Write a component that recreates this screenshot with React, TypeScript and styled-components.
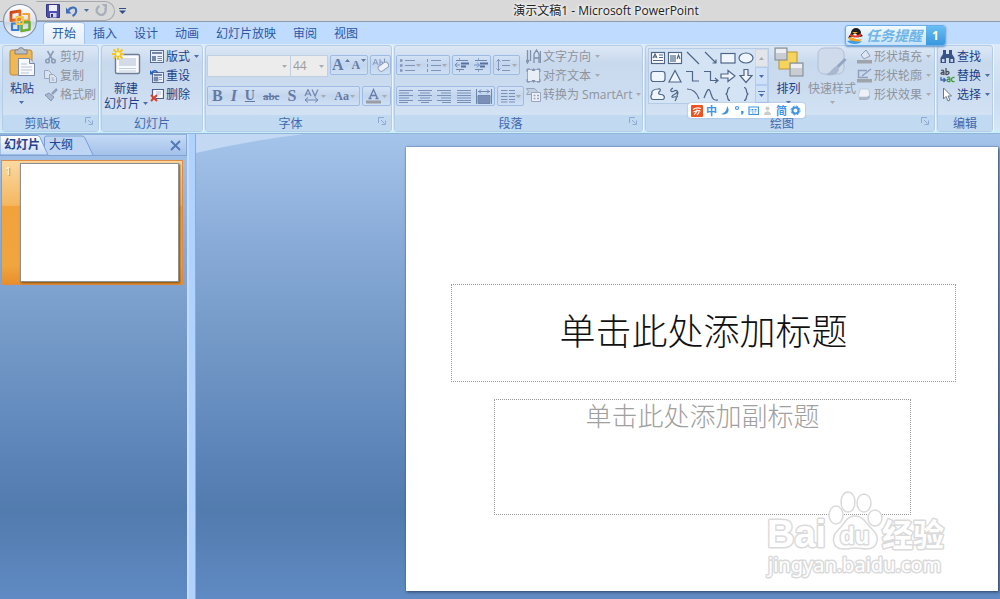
import React from "react";
import styled, { createGlobalStyle, css } from "styled-components";

const GlobalStyle = createGlobalStyle`
  * { box-sizing: border-box; }
  html, body { margin: 0; padding: 0; }
  body {
    background: #608ac3;
    font-family: "Open Sans", "Noto Sans CJK SC", sans-serif;
    font-size: 12px;
    line-height: 16px;
    color: #1e3f86;
  }
  button, select { font: inherit; color: inherit; }
  button { border: 0; padding: 0; margin: 0; background: none; cursor: default; }
  svg { display: block; flex: none; }
`;

/* ---------- window frame ---------- */

const Window = styled.div`
  display: flex;
  flex-direction: column;
  min-height: 100vh;
  position: relative;
`;

const TitleBar = styled.header`
  display: flex;
  align-items: center;
  height: 22px;
  background: #d9d9d9;
  border-bottom: 1px solid #8f9baa;
  position: relative;
`;

const QuickAccess = styled.div`
  display: flex;
  align-items: center;
  gap: 6px;
  height: 20px;
  margin-left: 36px;
  padding: 0 6px 0 9px;
  border: 1px solid #a5a8ad;
  border-left-color: transparent;
  border-radius: 0 10px 10px 0;
`;

const MoreCommands = styled.button`
  margin-left: 4px;
`;

const WindowTitle = styled.h1`
  flex: 1;
  margin: 0;
  padding-left: 86px;
  text-align: center;
  font-size: 12px;
  line-height: 20px;
  font-weight: 400;
  color: #222;
  text-shadow: 0 0 4px #fff, 0 0 4px #fff;
`;

const OfficeButton = styled.button`
  position: absolute;
  left: 2px;
  top: 3px;
  z-index: 3;
`;

const TabStrip = styled.nav`
  display: flex;
  gap: 1px;
  padding: 1px 0 0 44px;
  height: 22px;
  background: #bfdbff;
`;

const Tab = styled.button<{ $active?: boolean }>`
  padding: 0 8px;
  line-height: 20px;
  color: #2c57a3;
  ${(p) =>
    p.$active &&
    css`
      background: linear-gradient(#f4f9ff, #e2edfa);
      box-shadow: 0 0 0 1px #a3c3ee;
      border-radius: 3px 3px 0 0;
    `}
`;

const Reminder = styled.button`
  position: absolute;
  right: 54px;
  top: 25px;
  z-index: 3;
  display: flex;
  align-items: stretch;
  height: 21px;
  border: 1px solid #69aee6;
  border-radius: 3px;
  background: linear-gradient(#f2faff, #c5e3fb);
  box-shadow: 0 1px 2px #6b94c4;
  overflow: hidden;
`;

const ReminderText = styled.span`
  padding: 0 4px 0 2px;
  font-size: 14px;
  line-height: 19px;
  font-weight: 700;
  font-style: italic;
  color: #6fb4e8;
`;

const ReminderCount = styled.span`
  width: 19px;
  line-height: 19px;
  font-weight: 700;
  text-align: center;
  color: #fffbd0;
  background: linear-gradient(#69bdf3, #3a97dd);
`;

/* ---------- ribbon ---------- */

const RibbonBar = styled.div`
  position: relative;
  display: flex;
  gap: 2px;
  padding: 1px 2px;
  background: linear-gradient(#dde9f7, #c9dcf1 60%, #d5e8f8);
  border-bottom: 1px solid #93b4da;
  box-shadow: inset 0 -2px 0 #c8eef8;
`;

const GroupBox = styled.section<{ $width: number }>`
  display: flex;
  flex-direction: column;
  flex: none;
  width: ${(p) => p.$width}px;
  border: 1px solid #b3cde9;
  border-radius: 3px;
  background: linear-gradient(#dce7f5, #c8d9ed 20%, #cbdcf0 50%, #d8e7f6);
  box-shadow: 1px 0 0 #eef6fd;
`;

const GroupBody = styled.div`
  display: flex;
  align-items: flex-start;
  height: 69px;
`;

const GroupLabel = styled.h2<{ $launcher?: boolean }>`
  display: flex;
  align-items: flex-end;
  justify-content: center;
  position: relative;
  margin: 0;
  height: 16px;
  padding-right: ${(p) => (p.$launcher ? 16 : 0)}px;
  font-size: 12px;
  line-height: 14px;
  font-weight: 400;
  color: #3f68ae;
  background: #c1d9f1;
`;

const Launcher = styled.button`
  position: absolute;
  right: 4px;
  top: 2px;
`;

const BigButton = styled.button<{ $width: number; $off?: boolean }>`
  display: flex;
  flex-direction: column;
  align-items: center;
  flex: none;
  width: ${(p) => p.$width}px;
  padding-top: 1px;
  color: ${(p) => (p.$off ? "#8e939c" : "#1e3f86")};
  line-height: 15px;
  gap: 4px;
`;

const BigLine = styled.span`
  display: flex;
  align-items: center;
  gap: 3px;
  white-space: nowrap;
`;

const BigText = styled.span`
  display: flex;
  flex-direction: column;
  align-items: center;
`;

const ArrowSlot = styled.span`
  display: flex;
  align-items: center;
  height: 12px;
`;

const SmallColumn = styled.div`
  display: flex;
  flex-direction: column;
  flex: none;
  padding-top: 1px;
`;

const SmallButton = styled.button<{ $off?: boolean }>`
  display: flex;
  align-items: center;
  gap: 2px;
  height: 19px;
  white-space: nowrap;
  color: ${(p) => (p.$off ? "#8e939c" : "#1e3f86")};
`;

const SmallText = styled.span`
  margin-right: 2px;
`;

const ControlRows = styled.div`
  display: flex;
  flex-direction: column;
  gap: 11px;
  padding: 9px 2px 0 1px;
`;

const ControlRow = styled.div`
  display: flex;
  gap: 2px;
  height: 20px;
`;

const Segment = styled.div<{ $width: number }>`
  display: flex;
  align-items: center;
  justify-content: space-around;
  flex: none;
  width: ${(p) => p.$width}px;
  height: 20px;
  border: 1px solid #9dbbe3;
  border-radius: 2px;
  background: linear-gradient(#d3e2f5, #c2d5ee 50%, #cfe0f4);
`;

const GlyphButton = styled.button<{ $size?: number }>`
  display: flex;
  align-items: center;
  gap: 1px;
  line-height: 18px;
  font-family: "Liberation Serif", serif;
  font-weight: 700;
  font-size: ${(p) => p.$size ?? 14}px;
  color: #647aa3;
`;

const RaisedMark = styled.span`
  align-self: flex-start;
  padding-top: 3px;
`;

const Italic = styled.i`
  font-weight: 700;
`;

const Combo = styled.label<{ $width: number }>`
  position: relative;
  display: flex;
  flex: none;
  width: ${(p) => p.$width}px;
  height: 22px;
  border: 1px solid #c0cfe2;
  background: #ececec;

  & + & {
    margin-left: -3px;
  }

  svg {
    position: absolute;
    right: 3px;
    top: 9px;
  }
`;

const ComboSelect = styled.select`
  flex: 1;
  min-width: 0;
  appearance: none;
  border: 0;
  padding: 0 2px;
  background: transparent;
  color: #9b9b9b;
`;

const GalleryBox = styled.div`
  display: flex;
  flex: none;
  width: 121px;
  height: 56px;
  margin: 2px 0 0 2px;
  border: 1px solid #b5cce8;
  background: #d5e4f5;
`;

const ShapeGrid = styled.div`
  flex: 1;
  display: grid;
  grid-template-columns: repeat(6, 1fr);
  grid-template-rows: repeat(3, 18px);
  place-items: center;
`;

const GalleryScroll = styled.div`
  display: flex;
  flex-direction: column;
  width: 13px;
`;

const ScrollButton = styled.button<{ $off?: boolean }>`
  flex: 1;
  display: flex;
  align-items: center;
  justify-content: center;
  border: 1px solid ${(p) => (p.$off ? "#d3d8de" : "#b2cbee")};
  background: ${(p) => (p.$off ? "#e2e5e9" : "#cfe1f8")};
`;

const ImeBar = styled.div`
  position: absolute;
  left: 688px;
  top: 59px;
  z-index: 2;
  display: flex;
  align-items: center;
  gap: 3px;
  height: 15px;
  padding: 0 4px 0 3px;
  border-radius: 3px;
  background: #fff;
  box-shadow: 0 0 2px #8ea9cc;
  font-size: 11px;
  font-weight: 700;
  line-height: 13px;
  color: #3f94e2;
`;

/* ---------- work area ---------- */

const Workspace = styled.main`
  flex: 1;
  display: flex;
  background: linear-gradient(
    #a5c4eb,
    #89abd7 23%,
    #7197c6 47%,
    #5d84b9 69%,
    #527bae 81%,
    #608ac3
  );
`;

const SidePane = styled.aside`
  flex: none;
  width: 187px;
`;

const PaneTabs = styled.div`
  position: relative;
  display: flex;
  align-items: center;
  height: 22px;
  border-top: 1px solid #93b4da;
  border-bottom: 1px solid #7fa3d6;
  border-right: 1px solid #86a8d8;
  background: linear-gradient(#c5daf5, #a3c1ea);
  padding-right: 5px;
`;

const PaneTabShape = styled.svg`
  position: absolute;
  left: 0;
  bottom: 0;
`;

const PaneTab = styled.button<{ $active?: boolean }>`
  position: relative;
  width: ${(p) => (p.$active ? 45 : 44)}px;
  padding-left: 4px;
  text-align: left;
  line-height: 20px;
  color: #26428c;
  font-weight: ${(p) => (p.$active ? 700 : 400)};
`;

const PaneClose = styled.button`
  margin-left: auto;
`;

const SlideList = styled.ol`
  margin: 0;
  padding: 4px 4px 0 1px;
  list-style: none;
`;

const SlideItem = styled.li`
  display: flex;
  padding: 2px 3px;
  height: 125px;
  border: 1px solid #df8a45;
  background: linear-gradient(#fbd9a2, #f4b75f 36%, #f2a23b 37%, #f0a53f 85%, #e88f2c);
  color: #fff;
`;

const SlideNumber = styled.span`
  width: 15px;
  text-align: left;
  font-size: 11px;
  text-shadow: 1px 1px 1px #a87a3a;
`;

const Thumbnail = styled.button`
  flex: 1;
  border: 1px solid #8f8f8f;
  background: #fff;
  box-shadow: 1px 1px 2px #7a4c10;
`;

const Splitter = styled.div`
  flex: none;
  width: 9px;
  background: #afd2ff;
  border-left: 2px solid #c5dcfb;
  border-right: 1px solid #85aadb;
`;

const Canvas = styled.div`
  position: relative;
  flex: 1;
  padding: 13px 2px 8px 210px;
`;

const Glare = styled.svg`
  position: absolute;
  left: 0;
  top: 0;
`;

const Slide = styled.article`
  position: relative;
  display: grid;
  grid-template-columns: 45fr 43fr 417fr 45fr 42fr;
  grid-template-rows: 137fr 98fr 17fr 116fr 76fr;
  aspect-ratio: 4 / 3;
  background: #fff;
  box-shadow: 1px 1px 3px #2b4568, 0 0 1px #4a6590;
`;

const Placeholder = styled.div`
  display: flex;
  justify-content: center;
  border: 1px dotted #9a9a9a;
  font-family: "Liberation Serif", "Noto Sans CJK SC", serif;
  white-space: nowrap;
`;

const TitlePlaceholder = styled(Placeholder)`
  grid-area: 2 / 2 / 3 / 5;
  align-items: center;
  font-size: 36px;
  line-height: 48px;
  font-weight: 300;
  color: #111;
`;

const SubtitlePlaceholder = styled(Placeholder)`
  grid-area: 4 / 3 / 5 / 4;
  font-size: 26px;
  line-height: 36px;
  font-weight: 300;
  color: #a0a0a0;
`;

const Watermark = styled.svg`
  position: absolute;
  right: 48px;
  bottom: 8px;

  text {
    paint-order: stroke;
    stroke-width: 3px;
    stroke-linejoin: round;
  }
`;

/* ---------- icons ---------- */

const Arrow = ({ color = "#4b6ea8" }: { color?: string }) => (
  <svg width="5" height="3" viewBox="0 0 5 3" aria-hidden="true">
    <path d="M0 0h5L2.5 3z" fill={color} />
  </svg>
);
const UpArrow = ({ color }: { color: string }) => (
  <svg width="5" height="3" viewBox="0 0 5 3" aria-hidden="true">
    <path d="M0 3h5L2.5 0z" fill={color} />
  </svg>
);
const FAINT = "#a9abb0";

const OfficeLogo = () => (
  <svg width="36" height="36" viewBox="0 0 36 36">
    <defs>
      <linearGradient id="orb" x1="0" y1="0" x2="0" y2="1">
        <stop offset="0" stopColor="#fff" />
        <stop offset=".5" stopColor="#dfe4ec" />
        <stop offset=".55" stopColor="#c9d4e4" />
        <stop offset="1" stopColor="#fff" />
      </linearGradient>
      <linearGradient id="logoRed" x1="0" y1="0" x2="1" y2="1">
        <stop offset="0" stopColor="#c93a12" />
        <stop offset="1" stopColor="#f08a2c" />
      </linearGradient>
    </defs>
    <circle cx="18" cy="18" r="16.5" fill="url(#orb)" stroke="#8694ac" strokeWidth="1.2" />
    <g fill="none" strokeLinejoin="round">
      <path d="M9 9.500l9-1.500v8.500l-9 1z" stroke="url(#logoRed)" strokeWidth="2.800" />
      <path d="M20.500 11h6.500v6.500h-6.500" stroke="#f0a23a" strokeWidth="2.200" />
      <path d="M10 20.500h6.500v6.500H10z" stroke="#3b7fd0" strokeWidth="2.200" />
      <path d="M19.500 19.500l8-.5v7.500l-8 1.500z" stroke="#6fab36" strokeWidth="2.600" />
      <path d="M14.500 14h6.500v7h-6.500z" stroke="#f8c545" strokeWidth="1.800" />
    </g>
  </svg>
);

const SaveIcon = () => (
  <svg width="14" height="14" viewBox="0 0 14 14">
    <path d="M.5.5h13v13h-12l-1-1z" fill="#4b50ad" stroke="#34388a" />
    <path d="M3 1h8v6H3z" fill="#eef1fb" />
    <path d="M4 9h6.500v4.500H4z" fill="#cfd4ea" />
    <path d="M5 10h2v3H5z" fill="#33377f" />
  </svg>
);
const UndoIcon = () => (
  <svg width="12" height="12" viewBox="0 0 12 12">
    <path d="M2.500 5.500C4 2 9 1.500 10 4.500c.8 3-1.500 5.500-3.500 6.500" fill="none" stroke="#3d6fbd" strokeWidth="2.200" />
    <path d="M0 2.500v6h5.500z" fill="#3d6fbd" />
  </svg>
);
const RedoIcon = () => (
  <svg width="13" height="13" viewBox="0 0 13 13">
    <path d="M4.500 2.200A4.500 4.500 0 1 0 10 4" fill="none" stroke="#a9b0bb" strokeWidth="2.400" />
    <path d="M6.500 0H12v5.500z" fill="#a9b0bb" />
  </svg>
);

const PasteIcon = () => (
  <svg width="27" height="30" viewBox="0 0 27 30">
    <rect x="1" y="3" width="22" height="25" rx="2" fill="#efb854" stroke="#b88a3c" />
    <path d="M6 3h3c0-3 6-3 6 0h3v4H6z" fill="#b9bec7" stroke="#6e747e" strokeWidth=".8" />
    <path d="M9.500 11.500h11l5 5v12h-16z" fill="#f7f9fd" stroke="#7a8aa8" />
    <path d="M20.500 11.500v5h5" fill="#d3dcec" stroke="#7a8aa8" />
    <path d="M12 17h6M12 20h11M12 23h11M12 26h8" stroke="#b9c3d8" />
  </svg>
);
const CutIcon = () => (
  <svg width="14" height="14" viewBox="0 0 14 14" fill="none" stroke="#8b9ab5" strokeWidth="1.500">
    <path d="M3.500 1l5 8.500M9.500 1l-5 8.500" />
    <circle cx="3.500" cy="11" r="1.800" />
    <circle cx="9.500" cy="11" r="1.800" />
  </svg>
);
const CopyIcon = () => (
  <svg width="14" height="14" viewBox="0 0 14 14" fill="#dbe3ef" stroke="#97a6c1">
    <path d="M.5 1.500h4l3 3v5h-7z" />
    <path d="M5.500 5.500h4l3 3v5h-7z" />
    <path d="M7.500 9h2M7.500 11h3" />
  </svg>
);
const BrushIcon = () => (
  <svg width="14" height="14" viewBox="0 0 14 14">
    <path d="M13 1L8 6" stroke="#8fa0bd" strokeWidth="2.500" />
    <path d="M1 7l4-2 5 4-3 4z" fill="#a9b7cf" stroke="#8596b5" />
  </svg>
);
const NewSlideIcon = () => (
  <svg width="30" height="30" viewBox="0 0 30 30">
    <rect x="4.500" y="7.500" width="24" height="19" rx="1.500" fill="#f8fafd" stroke="#6d7c99" strokeWidth="1.400" />
    <rect x="8" y="11" width="17" height="8" fill="#d3dbe9" />
    <path d="M8 21.500h17M8 24h17" stroke="#c3cede" />
    <path d="M7 1v12M1 7h12M2.500 2.500l9 9M11.500 2.500l-9 9" stroke="#f3c51e" strokeWidth="1.800" />
    <circle cx="7" cy="7" r="2" fill="#fff6c0" />
  </svg>
);
const LayoutIcon = () => (
  <svg width="14" height="13" viewBox="0 0 14 13">
    <rect x=".5" y=".5" width="13" height="12" fill="#eaf0f9" stroke="#5a6c92" />
    <path d="M2 3h10" stroke="#7386ab" strokeWidth="2" />
    <path d="M2 6h4v5H2z" fill="#7386ab" />
    <path d="M7.500 6.500H12M7.500 8.500H12M7.500 10.500H12" stroke="#7386ab" />
  </svg>
);
const ResetIcon = () => (
  <svg width="14" height="14" viewBox="0 0 14 14">
    <rect x="2.500" y="3.500" width="11" height="10" fill="#eaf0f9" stroke="#5a6c92" />
    <path d="M4 6h8" stroke="#7386ab" strokeWidth="2" />
    <path d="M4 8h4v4H4zM9 8.500h3M9 10.500h3" fill="#7386ab" stroke="#7386ab" strokeWidth=".7" />
    <path d="M2 3.500c2-3 5-2 5.500.5" fill="none" stroke="#2b5fc0" strokeWidth="1.500" />
    <path d="M0 1v4.500h4z" fill="#2b5fc0" />
  </svg>
);
const DeleteIcon = () => (
  <svg width="14" height="14" viewBox="0 0 14 14">
    <path d="M2.500 1.500h11v9h-11z" fill="#f5f8fd" stroke="#4a5f8c" strokeWidth="1.200" />
    <path d="M6 4h5M6 6h5" stroke="#b3c0d6" />
    <path d="M1 7l6 6M7 7l-6 6" stroke="#e0402a" strokeWidth="2" />
  </svg>
);

const LauncherIcon = () => (
  <svg width="9" height="9" viewBox="0 0 9 9" fill="none" stroke="#8faad2">
    <path d="M.5 6V.5H6M3 3l3.500 3.500M7.500 3.500v4h-4" />
  </svg>
);
const ClearIcon = () => (
  <svg width="17" height="16" viewBox="0 0 17 16">
    <path d="M1 8l2.500-6L6 8M2 6h3M8 2v6h2.500V5H8" fill="none" stroke="#8698b9" />
    <path d="M12.500 1.500v4" stroke="#8698b9" />
    <rect x="6" y="7" width="11" height="6" rx="2.500" transform="rotate(-35 11 10)" fill="#eef2f8" stroke="#8fa0bf" />
  </svg>
);
const SpacingIcon = () => (
  <svg width="16" height="14" viewBox="0 0 16 14" fill="none" stroke="#7086ae">
    <path d="M1 7l3-6.500L7 7M2 5h4M8 .5L11 7l3-6.500" strokeWidth="1.200" />
    <path d="M1 11h13M4 8.500L1 11l3 2.500M11 8.500l3 2.500-3 2.500" />
  </svg>
);
const FontColorIcon = () => (
  <svg width="15" height="16" viewBox="0 0 15 16">
    <path d="M3.500 10.500l4-9 4 9M5 7.500h5M2.500 10.500h3M9.500 10.500h3" fill="none" stroke="#687da5" strokeWidth="1.300" />
    <path d="M0 12.500h15v3H0z" fill="#9a9da3" />
  </svg>
);
const ListIcon = ({ numbered }: { numbered?: boolean }) => (
  <svg width="15" height="14" viewBox="0 0 15 14" stroke="#8094b8">
    <path d="M5 2.500h10M5 7.500h10M5 12.500h10" />
    {numbered ? (
      <path d="M1.500 1v3M1.500 6v3M1.500 11v3" />
    ) : (
      <path d="M0 2.500h2.500M0 7.500h2.500M0 12.500h2.500" strokeWidth="2.500" />
    )}
  </svg>
);
const IndentIcon = ({ more }: { more?: boolean }) => (
  <svg width="14" height="14" viewBox="0 0 14 14">
    <path d="M1 2.500h12M1 11.500h8" stroke="#7086ae" />
    <path d="M6 5.500h8M6 8.500h5" stroke="#56709f" strokeWidth="2.200" />
    <path d={more ? "M0 7h5M3 4.500L5.500 7 3 9.500" : "M5 7H0M2.500 4.500L0 7l2.500 2.500"} fill="none" stroke="#7390c4" />
    <path d="M4.500 12v2M4.500 0v2" stroke="#8fa2c4" />
  </svg>
);
const LineSpacingIcon = () => (
  <svg width="15" height="14" viewBox="0 0 15 14" fill="none" stroke="#8094b8">
    <path d="M6 2.500h8M6 7.500h8M6 12.500h8M2.500 1v12M.5 3.500l2-2 2 2M.5 10.500l2 2 2-2" />
  </svg>
);
const AlignIcon = ({ d }: { d: string }) => (
  <svg width="15" height="14" viewBox="0 0 15 14">
    <path d={d} stroke="#7b90b6" />
  </svg>
);
const DistributeIcon = () => (
  <svg width="16" height="15" viewBox="0 0 16 15" stroke="#6f86ae">
    <path d="M.5 0v15M15.500 0v15M2 2.500h12M5 .5l-2 2 2 2M11 .5l2 2-2 2" fill="none" />
    <path d="M2 6.500h12v8H2z" fill="#7c90b5" />
  </svg>
);
const ColumnsIcon = () => (
  <svg width="14" height="14" viewBox="0 0 14 14" stroke="#7b90b6">
    <path d="M0 1.500h6.500M0 4.500h6.500M0 7.500h6.500M0 10.500h6.500M0 13h6.500M8 1.500h6M8 4.500h6M8 7.500h6M8 10.500h6M8 13h6" />
  </svg>
);
const DirectionIcon = () => (
  <svg width="15" height="15" viewBox="0 0 15 15" fill="none" stroke="#8090ad" strokeWidth="1.300">
    <path d="M1.500 1v11M4.500 1v11M0 11l1.500 3L3 11M8 14V5l2.500-4L13 5v9M8 9h5M14.500 2v12" />
  </svg>
);
const AlignTextIcon = () => (
  <svg width="15" height="15" viewBox="0 0 15 15">
    <rect x="1.500" y="1.500" width="12" height="12" fill="#e9eef6" stroke="#9aa8bf" />
    <path d="M1 4V1h3M11 1h3v3M14 11v3h-3M4 14H1v-3" fill="none" stroke="#7e90b0" />
    <path d="M5.500 3h4l-2-3zM5.500 12h4l-2 3z" fill="#8192b0" />
  </svg>
);
const SmartArtIcon = () => (
  <svg width="15" height="15" viewBox="0 0 15 15" stroke="#96a4bd">
    <path d="M.5 1.500h8l3 3-3 3h-8l2-3z" fill="#c3cede" />
    <path d="M5.500 5.500h9v9h-9z" fill="#eef2f8" />
    <path d="M7.500 8.500h2M11 8.500h2M7.500 11.500h2M11 11.500h2" strokeWidth="1.500" />
  </svg>
);

const shapes: React.ReactNode[] = [
  <><rect x="1.500" y="2.500" width="13" height="11" fill="#fff" /><path d="M3 8l2-4 2 4M4 7h2M9 5h4M9 7.500h4M3 10.500h10" /></>,
  <><rect x="1.500" y="2.500" width="13" height="11" fill="#fff" /><path d="M4 5v7M6 5v7M8 5v7M10 9l1.500-4L13 9" /></>,
  <path d="M2 2l12 12" />,
  <path d="M2 2l11 11M13 9.500V13H9.500" />,
  <rect x="1" y="3.500" width="14" height="9.500" fill="#eef5ff" />,
  <ellipse cx="8" cy="8" rx="7" ry="5" fill="#eef5ff" />,
  <rect x="1" y="3.500" width="14" height="10" rx="2.500" fill="#eef5ff" />,
  <path d="M8 2.500L14 14H2z" fill="#eef5ff" />,
  <path d="M1 3.500h6.500v9.500H14" />,
  <path d="M1 3.500h6.500v9H15M12 10l3 2.500-3 2.500" />,
  <path d="M1 6h7V2.500L15 8l-7 5.500V10H1z" fill="#eef5ff" />,
  <path d="M6 1.500h4v6h4L8 14.500 2 7.500h4z" fill="#eef5ff" />,
  <path d="M8 3C4 3 1 5 2 8c-2 2-1 5.500 1 5.500h10c2-1 2-5-2-5-3 0-3-2-1-3.500C11 3 9 2.500 8 3z" fill="#eef5ff" />,
  <path d="M6 2c-4 2-2 5 1 3s5 1 1 3-4 4-1 3 3 1 1 4M10 5c3 2-2 5 1 6" />,
  <path d="M2 3c6 0 10 4 12 10" />,
  <path d="M1 12C5 2 6 1 8 8s4 6 7 6" />,
  <path d="M10 1.500C6 1.500 9 8 5.500 8 9 8 6 14.500 10 14.500" />,
  <path d="M6 1.500c4 0 1 6.500 4.500 6.500C7 8 10 14.500 6 14.500" />,
];

const ArrangeIcon = () => (
  <svg width="30" height="30" viewBox="0 0 30 30">
    <rect x="5" y="5" width="18" height="17" fill="#f6d35a" stroke="#b8953a" />
    <rect x="1" y="1" width="12" height="12" fill="#c9cdd3" stroke="#7e858f" />
    <rect x="16" y="16" width="13" height="13" fill="#c9cdd3" stroke="#7e858f" />
    <path d="M2 2h10v4H2zM17 17h11v4H17z" fill="#eceef1" />
  </svg>
);
const StylesIcon = () => (
  <svg width="30" height="30" viewBox="0 0 30 30">
    <rect x="1" y="1" width="26" height="26" rx="6" fill="#cfdaea" stroke="#b1bfd6" />
    <path d="M28.500 12l-8 8" stroke="#93a5c4" strokeWidth="3" />
    <path d="M20 19c-4 1-5 5-11 9 6 1 12 0 13-6z" fill="#a9b7cf" />
  </svg>
);
const FillIcon = () => (
  <svg width="15" height="15" viewBox="0 0 15 15">
    <path d="M4 6l5-5 4 6-6 3z" fill="#dde5f0" stroke="#8d9dba" />
    <path d="M0 11h15v3.500H0z" fill="#9fa3aa" />
  </svg>
);
const OutlineIcon = () => (
  <svg width="15" height="15" viewBox="0 0 15 15">
    <path d="M11 9.500H1.500v-7H10M5 8l9-7" fill="none" stroke="#8d9dba" strokeWidth="1.400" />
    <path d="M0 11h15v3.500H0z" fill="#9fa3aa" />
  </svg>
);
const EffectIcon = () => (
  <svg width="15" height="15" viewBox="0 0 15 15">
    <path d="M4 5h9v6l-3 2H2V8z" fill="#a9b5c8" />
    <path d="M3.500 2h8l1.500 6-3 2H1z" fill="#edf1f7" stroke="#b6c1d3" strokeWidth=".7" />
  </svg>
);
const FindIcon = () => (
  <svg width="15" height="14" viewBox="0 0 15 14" fill="#3b5286">
    <path d="M3 0h3v4h3V0h3v4l2.500 4v5H9V8H6v5H.5V8L3 4z" />
    <path d="M2 9h2.500v3H2zM10.500 9H13v3h-2.500z" fill="#c4d3ec" />
  </svg>
);
const ReplaceIcon = () => (
  <svg width="15" height="15" viewBox="0 0 15 15" fill="none" strokeWidth="1.300">
    <path d="M1 2.500c3-1 3 0 3 4.500M4 4C0 4 0 7 4 6M6 0v7M6 4c4-2 4 3 0 2.500" stroke="#4a4f5c" />
    <path d="M1 9v3h4M3.500 10l2 2-2 2" stroke="#3e64b0" />
    <path d="M7 9.500c3-1 3 0 3 4.500M10 11c-4 0-4 3 0 2.500M14.500 9.500c-4-1-4 5 0 4" stroke="#3e9a3e" />
  </svg>
);
const CursorIcon = () => (
  <svg width="15" height="15" viewBox="0 0 15 15">
    <path d="M3.500 1v11l2.500-2.500 2 4.500 2-1-2-4h3.500z" fill="#fff" stroke="#6c7789" />
  </svg>
);
const CloseIcon = () => (
  <svg width="11" height="11" viewBox="0 0 11 11">
    <path d="M1 1l9 9M10 1l-9 9" stroke="#4f7ab5" strokeWidth="1.800" />
  </svg>
);
const PenguinIcon = () => (
  <svg width="18" height="19" viewBox="0 0 18 19">
    <ellipse cx="10" cy="7" rx="5" ry="5" fill="#1d1d1d" />
    <path d="M5 7L2 12l4-1zM14 7l3 3-3 1z" fill="#1d1d1d" />
    <ellipse cx="9" cy="11" rx="3" ry="3" fill="#fff" />
    <path d="M4 8c4 2 8 2 11-1v3c-3 2-7 2-11 0z" fill="#e23b2a" />
    <path d="M6 6h6l-3 2z" fill="#f7b32a" />
    <path d="M2 12c5-2 9 3 14 1-2 4-10 5-14-1z" fill="#f4a620" />
    <path d="M1 15c5-2 9 2 15 0-2 4-12 4-15 0z" fill="#3d9ee6" />
  </svg>
);

/* ---------- composed parts ---------- */

type GroupProps = { label: string; width: number; launcher?: boolean; children: React.ReactNode };
const Group = ({ label, width, launcher, children }: GroupProps) => (
  <GroupBox $width={width} aria-label={label}>
    <GroupBody>{children}</GroupBody>
    <GroupLabel $launcher={launcher}>
      {label}
      {launcher && (
        <Launcher aria-label={`${label}选项`}>
          <LauncherIcon />
        </Launcher>
      )}
    </GroupLabel>
  </GroupBox>
);

type SmallProps = { icon: React.ReactNode; text: string; off?: boolean; menu?: boolean };
const Small = ({ icon, text, off, menu }: SmallProps) => (
  <SmallButton $off={off}>
    {icon}
    <SmallText>{text}</SmallText>
    {menu && <Arrow color={off ? FAINT : undefined} />}
  </SmallButton>
);

const aligns = [
  ["左对齐", "M0 1.500h14M0 4h10M0 6.500h14M0 9h10M0 11.500h14M0 13.500h9"],
  ["居中", "M0 1.500h14M2 4h10M0 6.500h14M2 9h10M0 11.500h14M3 13.500h8"],
  ["右对齐", "M0 1.500h14M4 4h10M0 6.500h14M4 9h10M0 11.500h14M5 13.500h9"],
  ["两端对齐", "M0 1.500h14M0 4h14M0 6.500h14M0 9h14M0 11.500h14M0 13.500h14"],
];

const ClipboardColumn = styled(SmallColumn)`
  padding-left: 3px;
`;
const DrawColumn = styled(SmallColumn)`
  padding-left: 1px;
`;
const EditColumn = styled(SmallColumn)`
  padding-left: 2px;
`;

const Ribbon = () => (
  <RibbonBar>
    <Group label="剪贴板" width={97} launcher>
      <BigButton $width={38}>
        <PasteIcon />
        <BigText>
          粘贴
          <ArrowSlot><Arrow /></ArrowSlot>
        </BigText>
      </BigButton>
      <ClipboardColumn>
        <Small icon={<CutIcon />} text="剪切" off />
        <Small icon={<CopyIcon />} text="复制" off />
        <Small icon={<BrushIcon />} text="格式刷" off />
      </ClipboardColumn>
    </Group>

    <Group label="幻灯片" width={102}>
      <BigButton $width={48}>
        <NewSlideIcon />
        <BigText>
          新建
          <BigLine>幻灯片<Arrow /></BigLine>
        </BigText>
      </BigButton>
      <SmallColumn>
        <Small icon={<LayoutIcon />} text="版式" menu />
        <Small icon={<ResetIcon />} text="重设" />
        <Small icon={<DeleteIcon />} text="删除" />
      </SmallColumn>
    </Group>

    <Group label="字体" width={187} launcher>
      <ControlRows>
        <ControlRow>
          <Combo $width={84}>
            <ComboSelect aria-label="字体" defaultValue="">
              <option value=""></option>
            </ComboSelect>
            <Arrow color={FAINT} />
          </Combo>
          <Combo $width={38}>
            <ComboSelect aria-label="字号" defaultValue="44">
              <option value="44">44</option>
            </ComboSelect>
            <Arrow color={FAINT} />
          </Combo>
          <Segment $width={38}>
            <GlyphButton $size={16} aria-label="增大字号">
              A<RaisedMark><UpArrow color="#647aa3" /></RaisedMark>
            </GlyphButton>
            <GlyphButton $size={12} aria-label="减小字号">
              A<RaisedMark><Arrow color="#647aa3" /></RaisedMark>
            </GlyphButton>
          </Segment>
          <Segment $width={21}>
            <GlyphButton aria-label="清除格式"><ClearIcon /></GlyphButton>
          </Segment>
        </ControlRow>
        <ControlRow>
          <Segment $width={153}>
            <GlyphButton $size={16}>B</GlyphButton>
            <GlyphButton $size={16}><Italic>I</Italic></GlyphButton>
            <GlyphButton $size={14}><u>U</u></GlyphButton>
            <GlyphButton $size={11}><s>abc</s></GlyphButton>
            <GlyphButton $size={16}>S</GlyphButton>
            <GlyphButton aria-label="字符间距"><SpacingIcon /><Arrow color={FAINT} /></GlyphButton>
            <GlyphButton $size={12}>Aa<Arrow color={FAINT} /></GlyphButton>
          </Segment>
          <Segment $width={29}>
            <GlyphButton aria-label="字体颜色"><FontColorIcon /><Arrow color={FAINT} /></GlyphButton>
          </Segment>
        </ControlRow>
      </ControlRows>
    </Group>

    <Group label="段落" width={249} launcher>
      <ControlRows>
        <ControlRow>
          <Segment $width={54}>
            <GlyphButton aria-label="项目符号"><ListIcon /><Arrow color={FAINT} /></GlyphButton>
            <GlyphButton aria-label="编号"><ListIcon numbered /><Arrow color={FAINT} /></GlyphButton>
          </Segment>
          <Segment $width={39}>
            <GlyphButton aria-label="降低列表级别"><IndentIcon /></GlyphButton>
            <GlyphButton aria-label="提高列表级别"><IndentIcon more /></GlyphButton>
          </Segment>
          <Segment $width={27}>
            <GlyphButton aria-label="行距"><LineSpacingIcon /><Arrow color={FAINT} /></GlyphButton>
          </Segment>
        </ControlRow>
        <ControlRow>
          <Segment $width={99}>
            {aligns.map(([name, d]) => (
              <GlyphButton key={name} aria-label={name}><AlignIcon d={d} /></GlyphButton>
            ))}
            <GlyphButton aria-label="分散对齐"><DistributeIcon /></GlyphButton>
          </Segment>
          <Segment $width={27}>
            <GlyphButton aria-label="分栏"><ColumnsIcon /><Arrow color={FAINT} /></GlyphButton>
          </Segment>
        </ControlRow>
      </ControlRows>
      <SmallColumn>
        <Small icon={<DirectionIcon />} text="文字方向" off menu />
        <Small icon={<AlignTextIcon />} text="对齐文本" off menu />
        <Small icon={<SmartArtIcon />} text="转换为 SmartArt" off menu />
      </SmallColumn>
    </Group>

    <Group label="绘图" width={290} launcher>
      <GalleryBox>
        <ShapeGrid>
          {shapes.map((shape, i) => (
            <button key={i} aria-label={`形状 ${i + 1}`}>
              <svg width="16" height="16" viewBox="0 0 16 16" fill="none" stroke="#4f6688" strokeWidth="1.200">
                {shape}
              </svg>
            </button>
          ))}
        </ShapeGrid>
        <GalleryScroll>
          <ScrollButton $off aria-label="上一行"><UpArrow color={FAINT} /></ScrollButton>
          <ScrollButton aria-label="下一行"><Arrow /></ScrollButton>
          <ScrollButton aria-label="其他形状">
            <svg width="7" height="6" viewBox="0 0 7 6"><path d="M0 .5h7" stroke="#4b6ea8" /><path d="M1 3h5L3.500 6z" fill="#4b6ea8" /></svg>
          </ScrollButton>
        </GalleryScroll>
      </GalleryBox>
      <BigButton $width={39}>
        <ArrangeIcon />
        <BigText>
          排列
          <ArrowSlot><Arrow /></ArrowSlot>
        </BigText>
      </BigButton>
      <BigButton $width={48} $off>
        <StylesIcon />
        <BigText>
          快速样式
          <ArrowSlot><Arrow color={FAINT} /></ArrowSlot>
        </BigText>
      </BigButton>
      <DrawColumn>
        <Small icon={<FillIcon />} text="形状填充" off menu />
        <Small icon={<OutlineIcon />} text="形状轮廓" off menu />
        <Small icon={<EffectIcon />} text="形状效果" off menu />
      </DrawColumn>
    </Group>

    <Group label="编辑" width={56}>
      <EditColumn>
        <Small icon={<FindIcon />} text="查找" />
        <Small icon={<ReplaceIcon />} text="替换" menu />
        <Small icon={<CursorIcon />} text="选择" menu />
      </EditColumn>
    </Group>

    <ImeBar>
      <svg width="12" height="12" viewBox="0 0 12 12"><rect width="12" height="12" rx="1" fill="#f0521f" /><path d="M2 4.500c3-2 5-2 8-1M2.500 7c3-1.500 5-1.500 7-1M3 9.500c2-1 3-4 3-5M8 5c1 2-1 4-2 5" fill="none" stroke="#fff" strokeWidth="1.200" /></svg>
      <span>中</span>
      <svg width="11" height="11" viewBox="0 0 11 11"><path d="M7 1c4 5 0 10-6.500 8C5 8.500 7 5 7 1z" fill="#3f94e2" /></svg>
      <svg width="11" height="11" viewBox="0 0 11 11"><circle cx="3" cy="3" r="1.500" fill="none" stroke="#3f94e2" strokeWidth="1.200" /><path d="M7 6h2.500c.5 2-.5 3.500-2 4z" fill="#3f94e2" /></svg>
      <svg width="11" height="11" viewBox="0 0 11 11" fill="none" stroke="#3f94e2"><path d="M1 2h9.500v7.500H1z" strokeWidth="1.200" /><path d="M2.500 4.500h6.500M2.500 6h6.500M4 8h3.500" strokeDasharray="1 .5" /></svg>
      <svg width="11" height="11" viewBox="0 0 11 11" fill="#cdcdcd"><circle cx="5.500" cy="3.500" r="2" /><path d="M2 10c0-5 7-5 7 0z" /></svg>
      <span>简</span>
      <svg width="11" height="11" viewBox="0 0 11 11" fill="none" stroke="#3f94e2"><circle cx="5.500" cy="5.500" r="3" strokeWidth="2" /><circle cx="5.500" cy="5.500" r="4.500" strokeDasharray="2 1.530" /></svg>
    </ImeBar>
  </RibbonBar>
);

const tabs = ["开始", "插入", "设计", "动画", "幻灯片放映", "审阅", "视图"];

export default function App() {
  return (
    <Window>
      <GlobalStyle />
      <OfficeButton aria-label="Office 按钮"><OfficeLogo /></OfficeButton>
      <TitleBar>
        <QuickAccess>
          <button aria-label="保存"><SaveIcon /></button>
          <button aria-label="撤消"><UndoIcon /></button>
          <button aria-label="撤消列表"><Arrow /></button>
          <button aria-label="重复"><RedoIcon /></button>
        </QuickAccess>
        <MoreCommands aria-label="自定义快速访问工具栏">
          <svg width="7" height="6" viewBox="0 0 7 6"><path d="M0 .5h7" stroke="#2f4f86" /><path d="M0 2.500h7L3.500 6z" fill="#2f4f86" /></svg>
        </MoreCommands>
        <WindowTitle>演示文稿1 - Microsoft PowerPoint</WindowTitle>
      </TitleBar>
      <TabStrip>
        {tabs.map((t, i) => (
          <Tab key={t} $active={i === 0}>{t}</Tab>
        ))}
      </TabStrip>
      <Reminder>
        <PenguinIcon />
        <ReminderText>任务提醒</ReminderText>
        <ReminderCount>1</ReminderCount>
      </Reminder>
      <Ribbon />
      <Workspace>
        <SidePane>
          <PaneTabs>
            <PaneTabShape width="96" height="20" viewBox="0 0 96 20">
              <defs>
                <linearGradient id="tabOn" x1="0" y1="0" x2="0" y2="1">
                  <stop offset="0" stopColor="#fff" />
                  <stop offset="1" stopColor="#c5dbf7" />
                </linearGradient>
              </defs>
              <path d="M44.500 20V3q0-2 2-2H82q2 0 3 2l8 17" fill="#bdd4f2" stroke="#7a9fd4" />
              <path d="M0 .5h37q2 0 3 2l8 17.500H0z" fill="url(#tabOn)" stroke="#7a9fd4" />
            </PaneTabShape>
            <PaneTab $active>幻灯片</PaneTab>
            <PaneTab>大纲</PaneTab>
            <PaneClose aria-label="关闭"><CloseIcon /></PaneClose>
          </PaneTabs>
          <SlideList>
            <SlideItem>
              <SlideNumber>1</SlideNumber>
              <Thumbnail aria-label="幻灯片 1" />
            </SlideItem>
          </SlideList>
        </SidePane>
        <Splitter />
        <Canvas>
          <Glare width="110" height="20" viewBox="0 0 110 20" aria-hidden="true">
            <path d="M0 0h108Q50 7 0 19z" fill="#c3d8f3" />
          </Glare>
          <Slide>
            <TitlePlaceholder>单击此处添加标题</TitlePlaceholder>
            <SubtitlePlaceholder>单击此处添加副标题</SubtitlePlaceholder>
            <Watermark width="190" height="94" viewBox="0 0 190 94" fill="#fff" stroke="#dadada" strokeWidth="1.500">
              <ellipse cx="76" cy="26" rx="7" ry="9" />
              <ellipse cx="88" cy="13" rx="7" ry="10" />
              <ellipse cx="104" cy="14" rx="7" ry="9" />
              <ellipse cx="115" cy="29" rx="7" ry="8" />
              <path d="M95 27c-9 0-10 8-17 14-8 8-5 19 5 19 5 0 8-1 12-1s8 1 12 1c10 0 14-11 6-19-7-6-9-14-18-14z" />
              <text x="7" y="58" fontFamily="Liberation Sans, sans-serif" fontWeight="700" fontSize="38">Bai</text>
              <text x="80" y="55" fontFamily="Liberation Sans, sans-serif" fontWeight="700" fontSize="24">du</text>
              <text x="122" y="57" fontFamily="Noto Sans CJK SC, sans-serif" fontWeight="700" fontSize="31">经验</text>
              <text x="8" y="83" fontFamily="Noto Sans, sans-serif" fontWeight="400" fontSize="20">jingyan.baidu.com</text>
            </Watermark>
          </Slide>
        </Canvas>
      </Workspace>
    </Window>
  );
}
